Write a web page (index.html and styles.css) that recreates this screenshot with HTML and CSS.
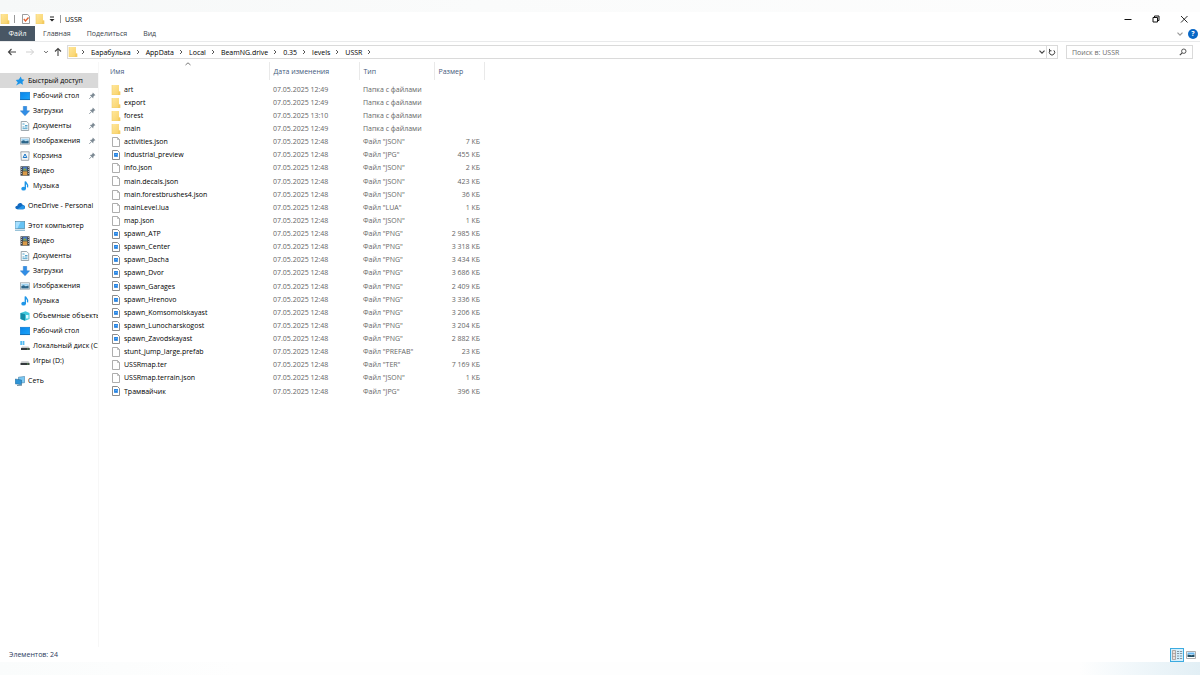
FILE: index.html
```html
<!DOCTYPE html>
<html lang="ru">
<head>
<meta charset="utf-8">
<title>USSR</title>
<link rel="stylesheet" href="styles.css">
</head>
<body>
<svg class="sprite" aria-hidden="true">
  <defs>
    <linearGradient id="gold" x1="0" y1="0" x2="1" y2="1"><stop offset="0" stop-color="#ffe79c"/><stop offset="1" stop-color="#f8d166"/></linearGradient>
    <linearGradient id="sky" x1="0" y1="0" x2="1" y2="1"><stop offset="0" stop-color="#0a84e8"/><stop offset="1" stop-color="#1ba5fa"/></linearGradient>
  </defs>
  <symbol id="folder" viewBox="0 0 10 10"><path d="M1 0h7v6.500h1.200V10H1z" fill="url(#gold)"/><path d="M7.600 6.500h1.600V10H7z" fill="#f3cb60"/><path d="M1 0v10h8" fill="none" stroke="#f0cd6b" stroke-width=".6"/></symbol>
  <symbol id="file" viewBox="0 0 10 10"><path d="M1.500.500h5l2 2v7h-7z" fill="#fff" stroke="#999" stroke-width=".8"/><path d="M6.500.500v2h2" fill="none" stroke="#999" stroke-width=".6"/></symbol>
  <symbol id="image" viewBox="0 0 10 10"><path d="M1.500.500h5l2 2v7h-7z" fill="#fff" stroke="#808080" stroke-width=".9"/><rect x="3.100" y="3" width="3.800" height="3.800" fill="#1f7fe0"/><path d="M4 5l1.500-1 1 1.500" fill="none" stroke="#7cc2ff" stroke-width=".7"/></symbol>
  <symbol id="star" viewBox="0 0 10 10"><path d="M5.800.500l1 2.800 2.700.4-2 2 .5 3-2.700-1.400L1 9.500l1.800-3L.8 4l3-.5z" fill="#1b94e8"/></symbol>
  <symbol id="desktop" viewBox="0 0 10 10"><rect x=".2" y="1.200" width="9.600" height="7.600" fill="url(#sky)" stroke="#0874c9" stroke-width=".5"/><path d="M.2 8.500h9.600" stroke="#075a9c" stroke-width=".6"/></symbol>
  <symbol id="download" viewBox="0 0 10 10"><path d="M3.300.300h3.400v4.500h3L5 9.800.300 4.800h3z" fill="#318ee6" stroke="#1c70c1" stroke-width=".4"/></symbol>
  <symbol id="doc" viewBox="0 0 10 10"><path d="M1.200.500h5.500l2 2v7H1.200z" fill="#fafcfd" stroke="#879299" stroke-width=".8"/><path d="M2.500 3h2M5 4.500h2.500M2.500 6h2M5 6h2.500M2.500 7.700h5" stroke="#3f9bc6" stroke-width=".9"/></symbol>
  <symbol id="picture" viewBox="0 0 10 10"><rect x=".4" y="1.800" width="9.200" height="6.400" fill="#fff" stroke="#8b969c" stroke-width=".7"/><path d="M1.300 2.700h7.400v2H1.300z" fill="#9ed3f3"/><path d="M1.300 7.400V5l2.400-.7 2 1 3-.8v2.900z" fill="#2c668a"/></symbol>
  <symbol id="bin" viewBox="0 0 10 10"><path d="M.8.800h8.400l-.5 8.500H1.300z" fill="#f3f5f6" stroke="#8b9297" stroke-width=".8"/><path d="M5 3L3.200 6.500h3.600z" fill="none" stroke="#1975c7" stroke-width="1"/></symbol>
  <symbol id="video" viewBox="0 0 10 10"><rect x=".5" y=".3" width="9" height="9.400" fill="#3d4248"/><path d="M2.700.800h4.600v3.800H2.700z" fill="#4b79be"/><path d="M2.700 5.300h4.600v4H2.700z" fill="#d99a48"/><path d="M4.500 2l2.800 2.600H3z" fill="#85aa45"/><path d="M1.500 1v8M8.500 1v8" stroke="#dfe2e5" stroke-width=".7" stroke-dasharray="1 1"/></symbol>
  <symbol id="music" viewBox="0 0 10 10"><ellipse cx="3.600" cy="7.700" rx="2.300" ry="1.900" fill="#1f96e8"/><path d="M5.300 8V.400c.3 1.900 3.700 2.500 2.200 6" fill="none" stroke="#1f96e8" stroke-width="1.400"/></symbol>
  <symbol id="cloud" viewBox="0 0 11 10"><path d="M2.600 8.500C-.8 8.500 0 4.600 2.600 4.700 3.300 1.100 7.500.900 8.500 4c3.200-.2 3.400 4.500.6 4.500z" fill="#1269bf"/><path d="M2.500 8.500L8.300 4.500c3-.3 3.200 4 .8 4z" fill="#2595e8"/></symbol>
  <symbol id="pc" viewBox="1 0 10 10"><rect x="1.200" y=".6" width="9.600" height="7" fill="#67c3f4" stroke="#437d9c" stroke-width=".6"/><path d="M1.500.900h5l-3 6.400h-2z" fill="#a7e0ff"/><path d="M1 9.200h10" stroke="#6ca9c8" stroke-width="1"/></symbol>
  <symbol id="cube" viewBox="0 0 10 10"><path d="M.5 2L5.500.3 9.500 2v6L5 9.700.5 8z" fill="#42c8dc"/><path d="M.5 2L5 3.300v6.400L.5 8z" fill="#148ca8"/><path d="M6 4h2.500v3.500H6z" fill="#ddfaff"/></symbol>
  <symbol id="disk" viewBox="0 0 10 10"><path d="M1.500 5.300h7L9.500 7h-9z" fill="#c6c9cb"/><path d="M.5 7h9v2h-9z" fill="#34393d"/><path d="M7 8h1.500" stroke="#7fdc69" stroke-width=".7"/></symbol>
  <symbol id="sysdisk" viewBox="0 0 10 10"><path d="M.3.300h1.800v1.500H.3zM2.600.300h1.800v1.500H2.600zM.3 2.300h1.800v1.500H.3zM2.600 2.300h1.800v1.500H2.600z" fill="#1ba4ec"/><path d="M2 5.600h6.500L9.500 7H1z" fill="#c6c9cb"/><path d="M1 7h8.700v2H1z" fill="#34393d"/><path d="M7 8h1.500" stroke="#7fdc69" stroke-width=".7"/></symbol>
  <symbol id="network" viewBox="1 0 10 10"><path d="M4.500 1.200L10.700.400v6.200l-6.200.8z" fill="#7cc8f2" stroke="#2e6f9b" stroke-width=".5"/><path d="M1.200 3l6.300 1v4.800L1.200 7.800z" fill="#2e94d6" stroke="#22608c" stroke-width=".5"/><path d="M3 9.500l5-.3" stroke="#50768c" stroke-width=".8"/></symbol>
  <symbol id="pin" viewBox="0 0 10 10"><path d="M6 .7l3.300 3.300-1.200.3-1.400 1.500-.1 2.200L2.200 3.600l2.300-.1L5.800 2z" fill="#7d8a94"/><path d="M4.500 5.700L1.500 8.700" stroke="#7d8a94" stroke-width="1"/></symbol>
  <symbol id="chev" viewBox="0 0 6 6"><path d="M2 1l2 2-2 2" fill="none" stroke="#444" stroke-width=".9"/></symbol>
  <symbol id="down" viewBox="0 0 8 8"><path d="M1.500 2.700L4 5.200l2.500-2.500" fill="none" stroke="currentColor" stroke-width="1.200"/></symbol>
</svg>

<div class="window">
  <header class="titlebar">
    <svg class="ico"><use href="#folder"/></svg>
    <span class="bar"></span>
    <button class="plain props" aria-label="Свойства"><svg class="ico" viewBox="0 0 10 10"><path d="M1.500.500h5.200l1.800 1.800v7.200h-7z" fill="#fff" stroke="#858585" stroke-width=".8"/><path d="M2.800 5l1.700 2 3-3.500" fill="none" stroke="#e3602c" stroke-width="1.300"/></svg></button>
    <button class="plain" aria-label="Новая папка"><svg class="ico"><use href="#folder"/></svg></button>
    <button class="plain" aria-label="Настройка панели"><svg class="small" viewBox="0 0 8 8"><path d="M2 2h4" stroke="#222" stroke-width="1"/><path d="M1.500 4h5L4 6.500z" fill="#222"/></svg></button>
    <span class="bar"></span>
    <h1 class="title">USSR</h1>
    <div class="controls">
      <button class="plain" aria-label="Свернуть"><svg viewBox="0 0 10 10"><path d="M1.500 5.500h7" stroke="#111"/></svg></button>
      <button class="plain" aria-label="Восстановить"><svg viewBox="0 0 10 10"><path d="M2 3.500h4.500V8H2zM3.500 3.500V2H8v4.500H6.500" fill="none" stroke="#111"/></svg></button>
      <button class="plain" aria-label="Закрыть"><svg viewBox="0 0 10 10"><path d="M2 2l6.500 6.500M8.500 2L2 8.500" stroke="#111" stroke-width=".9"/></svg></button>
    </div>
  </header>

  <nav class="ribbon" aria-label="Лента">
    <button class="tab file-tab">Файл</button>
    <button class="tab">Главная</button>
    <button class="tab">Поделиться</button>
    <button class="tab">Вид</button>
    <div class="ribbon-end">
      <button class="plain muted" aria-label="Развернуть ленту"><svg class="small"><use href="#down"/></svg></button>
      <button class="plain help" aria-label="Справка">?</button>
    </div>
  </nav>

  <div class="address-row">
    <button class="plain" aria-label="Назад"><svg class="arrow" viewBox="0 0 10 10"><path d="M9 5H1.500M4.500 2l-3 3 3 3" fill="none" stroke="#444" stroke-width="1.100"/></svg></button>
    <button class="plain" aria-label="Вперед"><svg class="arrow" viewBox="0 0 10 10"><path d="M1 5h7.500M5.500 2l3 3-3 3" fill="none" stroke="#cfcfcf"/></svg></button>
    <button class="plain recent" aria-label="Последние"><svg class="tiny"><use href="#down"/></svg></button>
    <button class="plain up" aria-label="Вверх"><svg class="arrow" viewBox="0 0 10 10"><path d="M5 9V1.500M2 4.500l3-3 3 3" fill="none" stroke="#444" stroke-width="1.100"/></svg></button>
    <nav class="path" aria-label="Путь">
      <svg class="ico"><use href="#folder"/></svg>
      <svg class="sep first"><use href="#chev"/></svg><a href="#">Барабулька</a>
      <svg class="sep"><use href="#chev"/></svg><a href="#">AppData</a>
      <svg class="sep"><use href="#chev"/></svg><a href="#">Local</a>
      <svg class="sep"><use href="#chev"/></svg><a href="#">BeamNG.drive</a>
      <svg class="sep"><use href="#chev"/></svg><a href="#">0.35</a>
      <svg class="sep"><use href="#chev"/></svg><a href="#">levels</a>
      <svg class="sep"><use href="#chev"/></svg><a href="#">USSR</a>
      <svg class="sep"><use href="#chev"/></svg>
      <div class="path-end">
        <button class="plain" aria-label="Предыдущие расположения"><svg class="small"><use href="#down"/></svg></button>
        <button class="plain refresh" aria-label="Обновить"><svg class="small" viewBox="0 0 8 8"><path d="M5.800 2.300A2.700 2.700 0 1 1 2.200 2.300M1.500.900v1.900h2" fill="none" stroke="#444" stroke-width="1"/></svg></button>
      </div>
    </nav>
    <label class="search"><input type="search" placeholder="Поиск в: USSR" aria-label="Поиск в: USSR"><svg class="small" viewBox="0 0 8 8"><circle cx="4.800" cy="3.200" r="2.200" fill="none" stroke="#444" stroke-width=".9"/><path d="M3.200 4.800L.8 7.200" stroke="#444" stroke-width="1.100"/></svg></label>
  </div>

  <div class="content">
    <nav class="sidebar" aria-label="Область навигации">
      <ul>
        <li class="root active"><a href="#"><svg><use href="#star"/></svg>Быстрый доступ</a></li>
        <li><a href="#"><svg><use href="#desktop"/></svg>Рабочий стол</a><svg class="pin"><use href="#pin"/></svg></li>
        <li><a href="#"><svg><use href="#download"/></svg>Загрузки</a><svg class="pin"><use href="#pin"/></svg></li>
        <li><a href="#"><svg><use href="#doc"/></svg>Документы</a><svg class="pin"><use href="#pin"/></svg></li>
        <li><a href="#"><svg><use href="#picture"/></svg>Изображения</a><svg class="pin"><use href="#pin"/></svg></li>
        <li><a href="#"><svg><use href="#bin"/></svg>Корзина</a><svg class="pin"><use href="#pin"/></svg></li>
        <li><a href="#"><svg><use href="#video"/></svg>Видео</a></li>
        <li><a href="#"><svg><use href="#music"/></svg>Музыка</a></li>
      </ul>
      <ul>
        <li class="root"><a href="#"><svg><use href="#cloud"/></svg>OneDrive - Personal</a></li>
      </ul>
      <ul>
        <li class="root"><a href="#"><svg><use href="#pc"/></svg>Этот компьютер</a></li>
        <li><a href="#"><svg><use href="#video"/></svg>Видео</a></li>
        <li><a href="#"><svg><use href="#doc"/></svg>Документы</a></li>
        <li><a href="#"><svg><use href="#download"/></svg>Загрузки</a></li>
        <li><a href="#"><svg><use href="#picture"/></svg>Изображения</a></li>
        <li><a href="#"><svg><use href="#music"/></svg>Музыка</a></li>
        <li><a href="#"><svg><use href="#cube"/></svg>Объемные объекты</a></li>
        <li><a href="#"><svg><use href="#desktop"/></svg>Рабочий стол</a></li>
        <li><a href="#"><svg><use href="#sysdisk"/></svg>Локальный диск (C:)</a></li>
        <li><a href="#"><svg><use href="#disk"/></svg>Игры (D:)</a></li>
      </ul>
      <ul>
        <li class="root"><a href="#"><svg><use href="#network"/></svg>Сеть</a></li>
      </ul>
    </nav>

    <main class="files">
      <table>
        <colgroup><col class="c-name"><col class="c-date"><col class="c-type"><col class="c-size"></colgroup>
        <thead>
          <tr><th>Имя<svg class="sort" viewBox="0 0 8 4"><path d="M1.500 3L4 .8 6.500 3" fill="none" stroke="#555" stroke-width=".8"/></svg></th><th>Дата изменения</th><th>Тип</th><th>Размер</th></tr>
        </thead>
        <tbody>
          <tr><td><svg><use href="#folder"/></svg>art</td><td>07.05.2025 12:49</td><td>Папка с файлами</td><td></td></tr>
          <tr><td><svg><use href="#folder"/></svg>export</td><td>07.05.2025 12:49</td><td>Папка с файлами</td><td></td></tr>
          <tr><td><svg><use href="#folder"/></svg>forest</td><td>07.05.2025 13:10</td><td>Папка с файлами</td><td></td></tr>
          <tr><td><svg><use href="#folder"/></svg>main</td><td>07.05.2025 12:49</td><td>Папка с файлами</td><td></td></tr>
          <tr><td><svg><use href="#file"/></svg>activities.json</td><td>07.05.2025 12:48</td><td>Файл "JSON"</td><td>7 КБ</td></tr>
          <tr><td><svg><use href="#image"/></svg>Industrial_preview</td><td>07.05.2025 12:48</td><td>Файл "JPG"</td><td>455 КБ</td></tr>
          <tr><td><svg><use href="#file"/></svg>info.json</td><td>07.05.2025 12:48</td><td>Файл "JSON"</td><td>2 КБ</td></tr>
          <tr><td><svg><use href="#file"/></svg>main.decals.json</td><td>07.05.2025 12:48</td><td>Файл "JSON"</td><td>423 КБ</td></tr>
          <tr><td><svg><use href="#file"/></svg>main.forestbrushes4.json</td><td>07.05.2025 12:48</td><td>Файл "JSON"</td><td>36 КБ</td></tr>
          <tr><td><svg><use href="#file"/></svg>mainLevel.lua</td><td>07.05.2025 12:48</td><td>Файл "LUA"</td><td>1 КБ</td></tr>
          <tr><td><svg><use href="#file"/></svg>map.json</td><td>07.05.2025 12:48</td><td>Файл "JSON"</td><td>1 КБ</td></tr>
          <tr><td><svg><use href="#image"/></svg>spawn_ATP</td><td>07.05.2025 12:48</td><td>Файл "PNG"</td><td>2 985 КБ</td></tr>
          <tr><td><svg><use href="#image"/></svg>spawn_Center</td><td>07.05.2025 12:48</td><td>Файл "PNG"</td><td>3 318 КБ</td></tr>
          <tr><td><svg><use href="#image"/></svg>spawn_Dacha</td><td>07.05.2025 12:48</td><td>Файл "PNG"</td><td>3 434 КБ</td></tr>
          <tr><td><svg><use href="#image"/></svg>spawn_Dvor</td><td>07.05.2025 12:48</td><td>Файл "PNG"</td><td>3 686 КБ</td></tr>
          <tr><td><svg><use href="#image"/></svg>spawn_Garages</td><td>07.05.2025 12:48</td><td>Файл "PNG"</td><td>2 409 КБ</td></tr>
          <tr><td><svg><use href="#image"/></svg>spawn_Hrenovo</td><td>07.05.2025 12:48</td><td>Файл "PNG"</td><td>3 336 КБ</td></tr>
          <tr><td><svg><use href="#image"/></svg>spawn_Komsomolskayast</td><td>07.05.2025 12:48</td><td>Файл "PNG"</td><td>3 206 КБ</td></tr>
          <tr><td><svg><use href="#image"/></svg>spawn_Lunocharskogost</td><td>07.05.2025 12:48</td><td>Файл "PNG"</td><td>3 204 КБ</td></tr>
          <tr><td><svg><use href="#image"/></svg>spawn_Zavodskayast</td><td>07.05.2025 12:48</td><td>Файл "PNG"</td><td>2 882 КБ</td></tr>
          <tr><td><svg><use href="#file"/></svg>stunt_jump_large.prefab</td><td>07.05.2025 12:48</td><td>Файл "PREFAB"</td><td>23 КБ</td></tr>
          <tr><td><svg><use href="#file"/></svg>USSRmap.ter</td><td>07.05.2025 12:48</td><td>Файл "TER"</td><td>7 169 КБ</td></tr>
          <tr><td><svg><use href="#file"/></svg>USSRmap.terrain.json</td><td>07.05.2025 12:48</td><td>Файл "JSON"</td><td>1 КБ</td></tr>
          <tr><td><svg><use href="#image"/></svg>Трамвайчик</td><td>07.05.2025 12:48</td><td>Файл "JPG"</td><td>396 КБ</td></tr>
        </tbody>
      </table>
    </main>
  </div>

  <footer class="status">
    <span>Элементов: 24</span>
    <div class="views">
      <button class="view selected" aria-label="Таблица"><svg viewBox="0 0 12 12"><path d="M1.500 1.500h3v9h-3z" fill="#e8dfdb" stroke="#9a8f8b" stroke-width=".7"/><path d="M1.500 4.500h3M1.500 7.500h3" stroke="#9a8f8b" stroke-width=".6"/><path d="M6 2.500h2.200M9 2.500h2.200M6 4.500h2.200M9 4.500h2.200M6 7h2.200M9 7h2.200M6 9.500h2.200M9 9.500h2.200" stroke="#7a8996" stroke-width=".9"/></svg></button>
      <button class="view" aria-label="Крупные значки"><svg viewBox="0 0 12 12"><path d="M1.500 2.500h9v7h-9z" fill="#fff" stroke="#999" stroke-width=".8"/><path d="M2.500 3.500h7v2h-7z" fill="#65b6f0"/><path d="M2.500 8V5.500l4 .8 3-.8V8z" fill="#234e63"/></svg></button>
    </div>
  </footer>
</div>
</body>
</html>
```
FILE: styles.css
```css
* { box-sizing: border-box; }

body {
  margin: 0;
  min-height: 100vh;
  display: flex;
  background: #fff;
  color: #000;
  font: 7px/13px "Open Sans", "Noto Sans", sans-serif;
}

.sprite { position: absolute; width: 0; height: 0; }
svg { flex: none; display: block; }
a { color: inherit; text-decoration: none; }
ul { list-style: none; margin: 0; padding: 0; }

button { font: inherit; color: inherit; border: 0; padding: 0; }
.plain {
  background: none;
  display: flex;
  align-items: center;
  justify-content: center;
}

.ico { width: 10px; height: 10px; }
.arrow { width: 10px; height: 10px; }
.small { width: 8px; height: 8px; }
.tiny { width: 6px; height: 6px; }

.window {
  flex: 1;
  min-width: 0;
  display: flex;
  flex-direction: column;
  padding: 12px 0 13px;
  background:
    linear-gradient(90deg, #f6f8f8, #fafbfb 40%, #fdfdfd) top / 100% 12px no-repeat,
    linear-gradient(90deg, #fafcfc, #fefefe 20%, #fefefe 90%, #f2f8fb 94%, #e2eff5) bottom / 100% 13px no-repeat,
    #fff;
}

/* Title bar */
.titlebar {
  display: flex;
  align-items: center;
  height: 14px;
  gap: 4px;
}
.bar { width: 1px; height: 8px; background: #999; }
.props { margin-left: 2px; }
.titlebar .props + .plain + .plain { margin-left: -1px; }
.title { margin: 0; font-size: 7px; font-weight: 400; }
.controls { margin-left: auto; display: flex; gap: 18px; padding-right: 11px; }
.controls svg { width: 10px; height: 10px; }

/* Ribbon */
.ribbon {
  display: flex;
  height: 16px;
  border-bottom: 1px solid #e9eaeb;
}
.tab { background: none; padding: 0 8px; color: #3b3f4a; }
.file-tab { background: #485664; color: #fff; width: 35px; }
.ribbon-end {
  margin-left: auto;
  display: flex;
  align-items: center;
  gap: 4px;
  padding-right: 2px;
}
.muted { color: #999; }
.help {
  width: 10px;
  height: 10px;
  border-radius: 50%;
  background: #0867c6;
  color: #fff;
  font-weight: 700;
  line-height: 10px;
}

/* Address row */
.address-row {
  display: flex;
  align-items: center;
  gap: 8px;
  height: 20px;
  padding: 0 7px;
}
.recent { color: #555; }
.up { margin: 0 -4px; }
.path {
  flex: 1;
  min-width: 0;
  display: flex;
  align-items: center;
  height: 14px;
  border: 1px solid #dadada;
}
.sep { width: 6px; height: 6px; margin: 0 5px 0 4px; }
.sep.first { margin-left: 2px; }
.path-end {
  margin-left: auto;
  display: flex;
  align-items: stretch;
  align-self: stretch;
  color: #444;
}
.refresh { border-left: 1px solid #dadada; width: 11px; }
.search {
  width: 127px;
  height: 14px;
  display: flex;
  align-items: center;
  border: 1px solid #dadada;
  padding: 0 5px;
}
.search input {
  flex: 1;
  min-width: 0;
  border: 0;
  padding: 0;
  outline: 0;
  background: none;
  font: inherit;
}
.search input::placeholder { color: #6d6d6d; opacity: 1; }

/* Content */
.content { flex: 1; display: flex; min-height: 0; }

.sidebar {
  width: 99px;
  flex: none;
  padding-top: 11px;
  border-right: 1px solid #f7f7f7;
  overflow: hidden;
}
.sidebar ul + ul { margin-top: 5px; }
.sidebar li {
  display: flex;
  align-items: center;
  height: 15px;
  padding-left: 20px;
}
.sidebar .root { padding-left: 15px; }
.sidebar .active { background: #d9d9d9; }
.sidebar a {
  flex: 1;
  min-width: 0;
  display: flex;
  align-items: center;
  gap: 3px;
  white-space: nowrap;
}
.sidebar a svg { width: 10px; height: 10px; }
.sidebar .pin { width: 8px; height: 8px; margin-right: 2px; }

.files { flex: 1; padding: 0 0 0 7px; }
table { width: 378px; table-layout: fixed; border-collapse: collapse; }
.c-name { width: 163px; }
.c-date { width: 90px; }
.c-type { width: 75px; }
.c-size { width: 50px; }
th {
  position: relative;
  height: 18px;
  padding: 0 4px;
  border-right: 1px solid #e9e9e9;
  text-align: left;
  font-weight: 400;
  color: #44597c;
}
.sort {
  position: absolute;
  top: 0;
  left: 48%;
  width: 8px;
  height: 4px;
}
thead::after { content: ""; display: block; height: 3px; }
td {
  height: 13px;
  padding: 0 4px;
  color: #666;
  white-space: nowrap;
}
tbody tr:nth-child(8n) td { height: 14px; }
td:first-child {
  display: flex;
  align-items: center;
  gap: 3px;
  padding-left: 5px;
  color: #000;
}
td:first-child svg { width: 10px; height: 10px; }
td:last-child { text-align: right; }

/* Status bar */
.status {
  display: flex;
  align-items: center;
  justify-content: space-between;
  height: 15px;
  padding: 0 2px 0 9px;
  color: #2a3a5c;
}
.views { display: flex; }
.view {
  width: 14px;
  height: 14px;
  display: flex;
  align-items: center;
  justify-content: center;
  background: none;
}
.view svg { width: 12px; height: 12px; }
.view.selected { background: #d5effc; border: 1px solid #3cabe0; }
```
